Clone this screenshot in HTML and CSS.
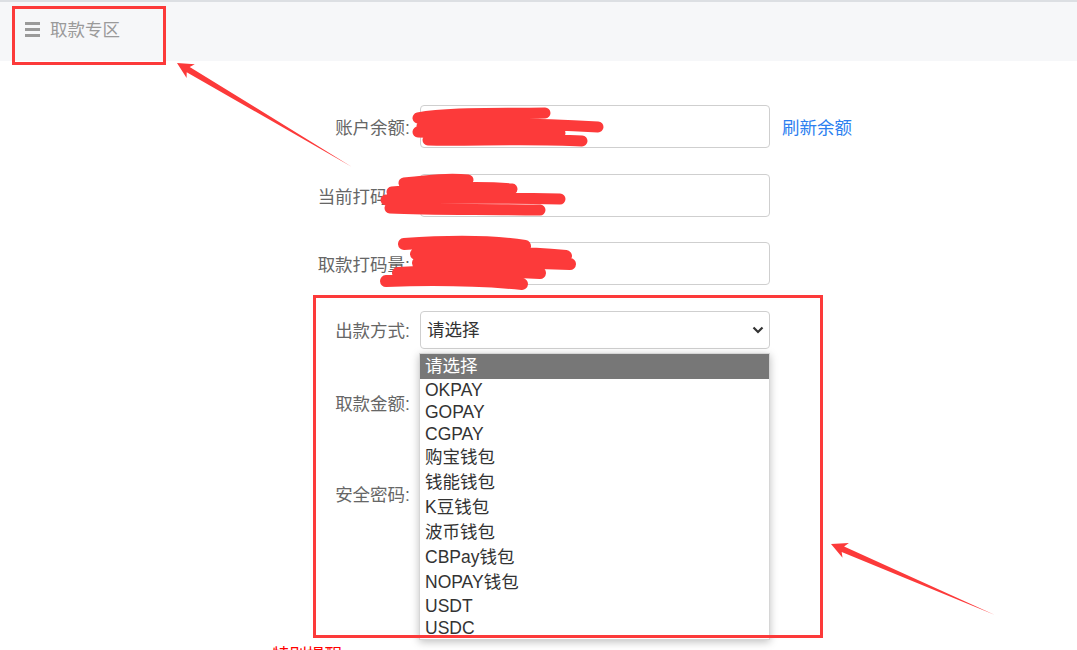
FILE: index.html
```html
<!DOCTYPE html>
<html lang="zh-CN">
<head>
    <meta charset="UTF-8">
    <meta name="viewport" content="width=device-width, initial-scale=1.0">
    <title>取款专区</title>
    <link rel="stylesheet" href="styles.css">
</head>
<body>
    <div class="header">
        <svg class="menu-icon" width="16" height="16" viewBox="0 0 16 16">
            <rect x="0" y="1" width="15" height="3" fill="#9a9a9a"/>
            <rect x="0" y="7" width="15" height="3" fill="#9a9a9a"/>
            <rect x="0" y="13" width="15" height="3" fill="#9a9a9a"/>
        </svg>
        <span class="header-title">取款专区</span>
    </div>

    <div class="form">
        <div class="form-row">
            <label>账户余额:</label>
            <input type="text" class="text-input">
            <a class="link" href="#">刷新余额</a>
        </div>
        <div class="form-row">
            <label>当前打码量:</label>
            <input type="text" class="text-input">
        </div>
        <div class="form-row">
            <label>取款打码量:</label>
            <input type="text" class="text-input">
        </div>
        <div class="form-row select-row">
            <label>出款方式:</label>
            <div class="select-wrap">
                <select class="select-input">
                    <option>请选择</option>
                </select>
                <svg class="chevron" width="12" height="8" viewBox="0 0 12 8">
                    <path d="M1.5 1.5 L6 6 L10.5 1.5" fill="none" stroke="#333" stroke-width="2.2"/>
                </svg>
            </div>
        </div>
        <div class="form-row amount-row">
            <label>取款金额:</label>
            <input type="text" class="text-input">
        </div>
        <div class="form-row">
            <label>安全密码:</label>
            <input type="password" class="text-input">
        </div>
    </div>
    <p class="notice">特别提醒：</p>

    <!-- 展开的下拉列表 -->
    <div class="dropdown">
        <div class="option selected cjk">请选择</div>
        <div class="option">OKPAY</div>
        <div class="option">GOPAY</div>
        <div class="option">CGPAY</div>
        <div class="option cjk">购宝钱包</div>
        <div class="option cjk">钱能钱包</div>
        <div class="option cjk">K豆钱包</div>
        <div class="option cjk">波币钱包</div>
        <div class="option cjk">CBPay钱包</div>
        <div class="option cjk">NOPAY钱包</div>
        <div class="option">USDT</div>
        <div class="option">USDC</div>
    </div>

    <!-- 标注 -->
    <svg class="marks" width="1077" height="650" viewBox="0 0 1077 650">
        <g stroke="#fc3a3a" stroke-linecap="round" stroke-linejoin="round" fill="none">
            <path d="M418 118 C450 112 500 114 545 113 M422 126 C470 122 540 124 598 127 M418 132 C480 134 520 132 560 133 M428 140 C470 141 530 138 582 141" stroke-width="11"/>
            <path d="M404 183 C430 180 450 178 468 180 M392 192 C430 188 480 186 512 189 M386 200 C440 197 500 198 560 199 M390 208 C430 210 480 209 540 210" stroke-width="11"/>
            <path d="M404 244 C460 240 500 242 525 246 M416 254 C460 250 520 252 566 256 M418 263 C450 261 520 262 570 264 M398 273 C440 270 500 271 540 273 M386 281 C440 279 490 281 522 284" stroke-width="12"/>
        </g>
        <rect x="13.5" y="7.5" width="151" height="56" fill="none" stroke="#fc3a3a" stroke-width="3"/>
        <rect x="314.5" y="296.5" width="507" height="340" fill="none" stroke="#fc3a3a" stroke-width="3"/>
        <polygon points="177,63 194.8,64.3 189.7,67 352,167 186.7,72.2 186.6,78.1" fill="#fc3a3a"/>
        <polygon points="831,544 848.9,543 844.1,546.4 995,615 841.7,552 842.5,557.7" fill="#fc3a3a"/>
    </svg>
</body>
</html>
```

FILE: styles.css
```css
* {
    box-sizing: border-box;
    margin: 0;
    padding: 0;
}

body {
    position: relative;
    font-family: "Liberation Sans", "Noto Sans CJK SC", sans-serif;
    font-size: 17.5px;
    color: #333;
    background-color: #fff;
    height: 650px;
    overflow: hidden;
}

.header {
    height: 61px;
    background-color: #f6f7f9;
    border-top: 2px solid #dcdfe3;
    display: flex;
    align-items: center;
    padding-left: 25px;
    padding-bottom: 6px;
}

.menu-icon {
    margin-right: 9px;
}

.header-title {
    color: #9a9a9a;
    font-size: 17.5px;
}

.form {
    padding-top: 44px;
    padding-left: 290px;
}

.form-row {
    display: flex;
    align-items: center;
    margin-bottom: 25.5px;
}

.form-row label {
    width: 130px;
    padding-right: 10px;
    text-align: right;
    color: #666;
}

.text-input {
    width: 350px;
    height: 43px;
    border: 1px solid #cfcfcf;
    border-radius: 4px;
    padding: 0 8px;
    font-size: 17.5px;
    font-family: inherit;
}

.link {
    margin-left: 12px;
    color: #2d7ff0;
    text-decoration: none;
}

.select-row {
    margin-bottom: 32px;
}

.select-wrap {
    position: relative;
}

.select-input {
    appearance: none;
    -webkit-appearance: none;
    width: 350px;
    height: 38px;
    border: 1px solid #cfcfcf;
    border-radius: 4px;
    padding: 0 6px;
    background-color: #fff;
    color: #333;
    font-size: 17.5px;
    font-family: inherit;
}

.chevron {
    position: absolute;
    right: 6px;
    top: 15px;
}

.amount-row {
    margin-bottom: 48.5px;
}

.notice {
    position: absolute;
    left: 272px;
    top: 641px;
    color: #f00;
}

.dropdown {
    position: absolute;
    left: 419px;
    top: 353px;
    width: 351px;
    height: 287px;
    background-color: #fff;
    border: 1px solid #d6d6d6;
    box-shadow: 0 2px 8px rgba(0,0,0,0.25);
}

.option {
    height: 22px;
    line-height: 22px;
    padding-left: 5px;
    color: #333;
    white-space: nowrap;
}

.option.cjk {
    height: 25px;
    line-height: 25px;
}

.option.selected {
    background-color: #777;
    color: #fff;
}

.marks {
    position: absolute;
    left: 0;
    top: 0;
    pointer-events: none;
}
```
